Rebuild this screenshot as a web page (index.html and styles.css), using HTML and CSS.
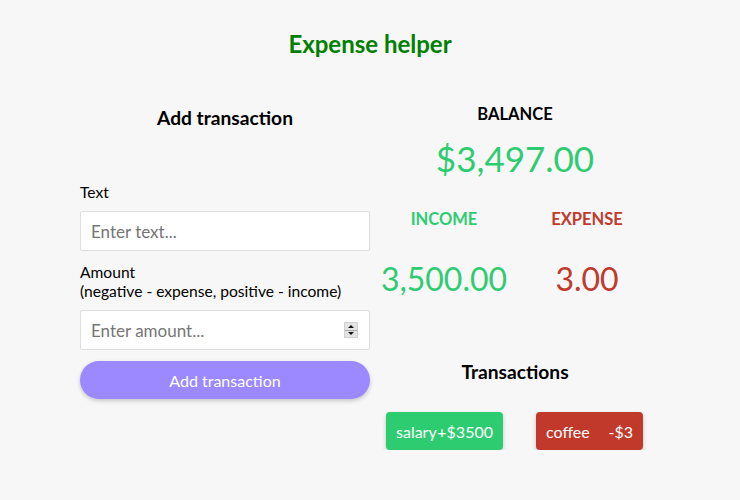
FILE: index.html
```html
<!DOCTYPE html>
<html>
<head>
<meta charset="utf-8">
<link rel="stylesheet" href="styles.css">
</head>
<body>
<h1 class="title">Expense helper</h1>
<div class="main">
  <div class="form-col">
    <h2 class="heading">Add transaction</h2>
    <label class="label label-text">Text</label>
    <div class="field"><input class="input" type="text" placeholder="Enter text..."></div>
    <label class="label label-amount">Amount<br>(negative - expense, positive - income)</label>
    <div class="field">
      <input class="input" type="text" placeholder="Enter amount...">
      <span class="spinner"><span class="spin-up"></span><span class="spin-down"></span></span>
    </div>
    <button class="btn">Add transaction</button>
  </div>
  <div class="summary-col">
    <div class="balance-label">BALANCE</div>
    <div class="balance">$3,497.00</div>
    <div class="inc-exp">
      <div class="ie-label income">INCOME</div>
      <div class="ie-label expense">EXPENSE</div>
      <div class="ie-value income">3,500.00</div>
      <div class="ie-value expense">3.00</div>
    </div>
    <h2 class="heading tx-heading">Transactions</h2>
    <div class="tx-list">
      <div class="tx tx-plus"><span>salary</span><span>+$3500</span></div>
      <div class="tx tx-minus"><span>coffee</span><span>-$3</span></div>
    </div>
  </div>
</div>
</body>
</html>
```
FILE: styles.css
```css
* { box-sizing: border-box; }
body {
  margin: 0;
  background: #f7f7f7;
  font-family: Lato, "Open Sans", sans-serif;
  color: #000;
}
.title {
  margin: 30px 0 0;
  text-align: center;
  font-size: 24px;
  line-height: 28px;
  font-weight: 700;
  color: #008000;
}
.main {
  display: flex;
  align-items: flex-start;
  padding-left: 80px;
  margin-top: 42px;
}
.form-col {
  width: 290px;
  display: flex;
  flex-direction: column;
}
.heading {
  margin: 6px 0 0;
  text-align: center;
  font-size: 19.2px;
  line-height: 24px;
  font-weight: 700;
}
.label {
  display: block;
  font-size: 15.6px;
  line-height: 19px;
}
.label-text { margin-top: 53px; }
.label-amount { margin-top: 12px; }
.field {
  position: relative;
  margin-top: 9px;
}
.input {
  display: block;
  width: 100%;
  height: 40px;
  border: 1px solid #dedede;
  border-radius: 2px;
  background: #fff;
  padding: 0 10px;
  font-family: Lato, sans-serif;
  font-size: 17px;
  outline: none;
}
.input::placeholder { color: #757575; }
.spinner {
  position: absolute;
  right: 12px;
  top: 12px;
  width: 14px;
  height: 16px;
  background: #e4e4e4;
  border: 1px solid #d0d0d0;
  display: flex;
  flex-direction: column;
}
.spin-up, .spin-down {
  flex: 1;
  display: flex;
  align-items: center;
  justify-content: center;
}
.spin-up { border-bottom: 1px solid #a8a8a8; }
.spin-up::before {
  content: "";
  border-left: 3px solid transparent;
  border-right: 3px solid transparent;
  border-bottom: 3px solid #111;
}
.spin-down::before {
  content: "";
  border-left: 3px solid transparent;
  border-right: 3px solid transparent;
  border-top: 3px solid #111;
}
.btn {
  margin-top: 11px;
  height: 38px;
  border: none;
  border-radius: 19px;
  background: #9c88ff;
  color: #fff;
  font-family: Lato, sans-serif;
  font-size: 16px;
  box-shadow: 0 2px 4px rgba(0,0,0,0.2);
}
.summary-col {
  width: 270px;
  margin-left: 10px;
  text-align: center;
}
.balance-label {
  margin-top: 4px;
  font-size: 16.5px;
  line-height: 20px;
  font-weight: 700;
}
.balance {
  margin-top: 14px;
  font-size: 35px;
  line-height: 40px;
  color: #2ecc71;
}
.inc-exp {
  display: grid;
  grid-template-columns: 128px 158px;
  margin-top: 31px;
}
.ie-label {
  font-size: 16.5px;
  line-height: 20px;
  font-weight: 700;
}
.ie-value {
  margin-top: 30px;
  font-size: 32px;
  line-height: 40px;
}
.income { color: #2ecc71; }
.expense { color: #c0392b; }
.tx-heading { margin-top: 61px; }
.tx-list {
  display: flex;
  gap: 33px;
  padding-left: 6px;
  margin-top: 28px;
}
.tx {
  display: flex;
  justify-content: space-between;
  align-items: center;
  height: 38px;
  padding: 0 10px;
  border-radius: 4px;
  color: #fff;
  font-size: 16px;
  box-shadow: 0 2px 4px rgba(0,0,0,0.2);
}
.tx-plus { background: #2ecc71; width: 117px; }
.tx-minus { background: #c0392b; width: 107px; }
```
